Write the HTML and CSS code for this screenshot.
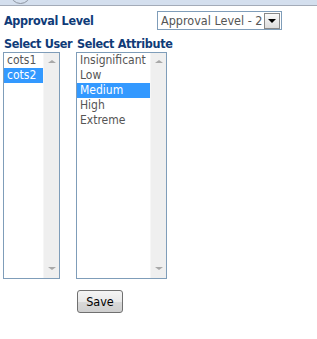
FILE: index.html
```html
<!DOCTYPE html>
<html>
<head>
  <meta charset="UTF-8">
  <title>Approval Level</title>
  <link rel="stylesheet" href="styles.css">
</head>
<body>

  <div class="topbar">
    <div class="topbar-circle"></div>
  </div>

  <div class="container">
    <div class="level-row">
      <label class="title">Approval Level</label>
      <div class="combo">
        <span class="combo-text">Approval Level - 2</span>
        <span class="combo-button"><span class="combo-arrow"></span></span>
      </div>
    </div>

    <div class="columns">
      <div class="column user-column">
        <label class="title">Select User</label>
        <div class="listbox user-list">
          <div class="list-items">
            <div class="list-item">cots1</div>
            <div class="list-item selected">cots2</div>
          </div>
          <div class="scrollbar">
            <span class="scroll-up"></span>
            <span class="scroll-down"></span>
          </div>
        </div>
      </div>

      <div class="column attribute-column">
        <label class="title">Select Attribute</label>
        <div class="listbox attribute-list">
          <div class="list-items">
            <div class="list-item">Insignificant</div>
            <div class="list-item">Low</div>
            <div class="list-item selected">Medium</div>
            <div class="list-item">High</div>
            <div class="list-item">Extreme</div>
          </div>
          <div class="scrollbar">
            <span class="scroll-up"></span>
            <span class="scroll-down"></span>
          </div>
        </div>
        <button class="save-button">Save</button>
      </div>
    </div>
  </div>

</body>
</html>
```

FILE: styles.css
```css
:root {
  --label-color: #0f3b78;
  --item-color: #555555;
  --border-color: #7f9db9;
  --selected-bg: #3399ff;
  --scroll-bg: #efefef;
  --band-color: #d4dfee;
}
body {
  margin: 0;
  font-family: Tahoma, "DejaVu Sans Condensed", sans-serif;
  font-size: 12px;
  background-color: #fff;
}
.topbar {
  height: 5px;
  background-color: var(--band-color);
  border-bottom: 1px solid #a3abb8;
  overflow: hidden;
  padding-left: 10px;
}
.topbar-circle {
  width: 19px;
  height: 19px;
  margin-top: -17px;
  border: 1px solid #8c94a0;
  border-radius: 50%;
}
.container {
  padding: 5px 0 0 3px;
}
.title {
  display: block;
  font-weight: bold;
  font-size: 12.5px;
  letter-spacing: -0.35px;
  color: var(--label-color);
  padding-left: 1px;
  white-space: nowrap;
}
.level-row {
  display: flex;
  align-items: center;
  justify-content: space-between;
  width: 279px;
  height: 19px;
}
.combo {
  display: flex;
  align-items: center;
  width: 120px;
  height: 17px;
  border: 1px solid var(--border-color);
  padding-left: 3px;
  gap: 2px;
}
.combo-text {
  flex: 1;
  color: var(--item-color);
  font-size: 12.5px;
  white-space: nowrap;
}
.combo-button {
  width: 14px;
  height: 14px;
  border: 1px solid #888;
  background: linear-gradient(#fafafa, #dcdcdc);
  display: flex;
  align-items: center;
  justify-content: center;
  margin-right: 1px;
}
.combo-arrow {
  width: 0;
  height: 0;
  border-left: 4px solid transparent;
  border-right: 4px solid transparent;
  border-top: 4px solid #000;
  margin-top: 1px;
}
.columns {
  display: flex;
  margin-top: 6px;
}
.user-column {
  width: 73px;
}
.listbox {
  display: flex;
  height: 225px;
  margin-top: 1px;
  border: 1px solid var(--border-color);
}
.user-list {
  width: 55px;
}
.attribute-list {
  width: 89px;
}
.list-items {
  flex: 1;
}
.list-item {
  height: 15px;
  line-height: 15px;
  padding-left: 3px;
  font-size: 12px;
  color: var(--item-color);
  white-space: nowrap;
  overflow: hidden;
}
.list-item.selected {
  background-color: var(--selected-bg);
  color: #fff;
}
.scrollbar {
  width: 15px;
  background-color: var(--scroll-bg);
  border-left: 1px solid #f6f6f6;
  display: flex;
  flex-direction: column;
  justify-content: space-between;
  align-items: center;
  padding: 7px 0 8px;
}
.scroll-up {
  width: 0;
  height: 0;
  border-left: 4px solid transparent;
  border-right: 4px solid transparent;
  border-bottom: 3px solid #a8a8a8;
}
.scroll-down {
  width: 0;
  height: 0;
  border-left: 4px solid transparent;
  border-right: 4px solid transparent;
  border-top: 3px solid #a8a8a8;
}
.save-button {
  display: block;
  margin-top: 11px;
  margin-left: 1px;
  width: 46px;
  height: 23px;
  padding: 0;
  border: 1px solid #707070;
  border-radius: 3px;
  background: linear-gradient(#f4f4f4 0%, #e9e9e9 50%, #d9d9d9 51%, #cfcfcf 100%);
  font-family: Tahoma, "DejaVu Sans Condensed", sans-serif;
  font-size: 12.5px;
  color: #000;
}
```
